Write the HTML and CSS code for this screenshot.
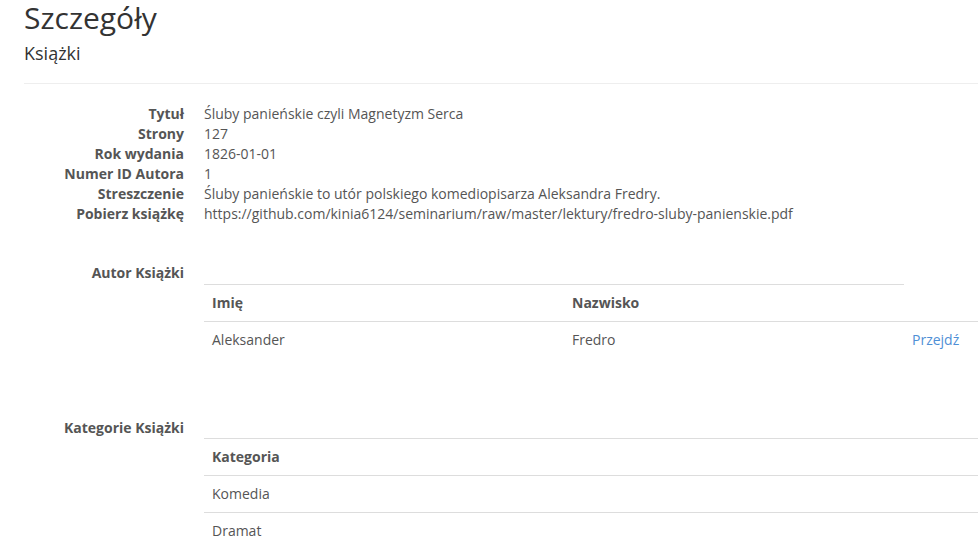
FILE: index.html
```html
<!DOCTYPE html>
<html lang="pl">
<head>
<meta charset="utf-8">
<title>Szczegóły</title>
<link rel="stylesheet" href="styles.css">
</head>
<body>
<div class="container">
  <h2 class="page-title">Szczegóły</h2>
  <h4 class="page-subtitle">Książki</h4>
  <hr class="divider">

  <dl class="details">
    <dt>Tytuł</dt><dd>Śluby panieńskie czyli Magnetyzm Serca</dd>
    <dt>Strony</dt><dd>127</dd>
    <dt>Rok wydania</dt><dd>1826-01-01</dd>
    <dt>Numer ID Autora</dt><dd>1</dd>
    <dt>Streszczenie</dt><dd>Śluby panieńskie to utór polskiego komediopisarza Aleksandra Fredry.</dd>
    <dt>Pobierz książkę</dt><dd>https://github.com/kinia6124/seminarium/raw/master/lektury/fredro-sluby-panienskie.pdf</dd>
  </dl>

  <dl class="details section">
    <dt>Autor Książki</dt>
    <dd>
      <table class="table author-table">
        <thead>
          <tr><th class="col-first">Imię</th><th class="col-second">Nazwisko</th></tr>
        </thead>
        <tbody>
          <tr><td>Aleksander</td><td>Fredro</td><td><a class="link" href="#">Przejdź</a></td></tr>
        </tbody>
      </table>
    </dd>
  </dl>

  <dl class="details section section-categories">
    <dt>Kategorie Książki</dt>
    <dd>
      <table class="table">
        <thead>
          <tr><th>Kategoria</th></tr>
        </thead>
        <tbody>
          <tr><td>Komedia</td></tr>
          <tr><td>Dramat</td></tr>
        </tbody>
      </table>
    </dd>
  </dl>
</div>
</body>
</html>
```

FILE: styles.css
```css
html, body {
  margin: 0;
  padding: 0;
  overflow: hidden;
  background: #fff;
}

body {
  font-family: "Open Sans", "Liberation Sans", sans-serif;
  font-size: 14px;
  line-height: 20px;
  color: #555;
}

.container {
  padding-left: 24px;
}

.page-title {
  margin: 0;
  padding-top: 1px;
  font-size: 30px;
  line-height: 33px;
  font-weight: 400;
  color: #333;
}

.page-subtitle {
  margin: 9px 0 0;
  font-size: 18px;
  line-height: 20px;
  font-weight: 400;
  color: #333;
}

.divider {
  margin: 20px 0 20px;
  border: 0;
  border-top: 1px solid #eee;
  height: 0;
}

.details {
  display: grid;
  grid-template-columns: 160px 1fr;
  column-gap: 20px;
  margin: 0;
}

.details dt {
  font-weight: 700;
  text-align: right;
  white-space: nowrap;
}

.details dd {
  margin: 0;
  white-space: nowrap;
}

.section {
  margin-top: 39px;
}

.section dd {
  padding-top: 21px;
}

.section-categories {
  margin-top: 40px;
}

.section-categories dd {
  padding-top: 20px;
}

.table {
  width: 100%;
  border-collapse: collapse;
  border-spacing: 0;
  margin-bottom: 20px;
}

.table th,
.table td {
  padding: 8px;
  text-align: left;
  vertical-align: top;
  border-top: 1px solid #ddd;
  line-height: 20px;
}

.table th {
  font-weight: 700;
}

.author-table .col-first {
  width: 344px;
}

.author-table .col-second {
  width: 324px;
}

.link {
  color: #4f8fd6;
  text-decoration: none;
}
```
